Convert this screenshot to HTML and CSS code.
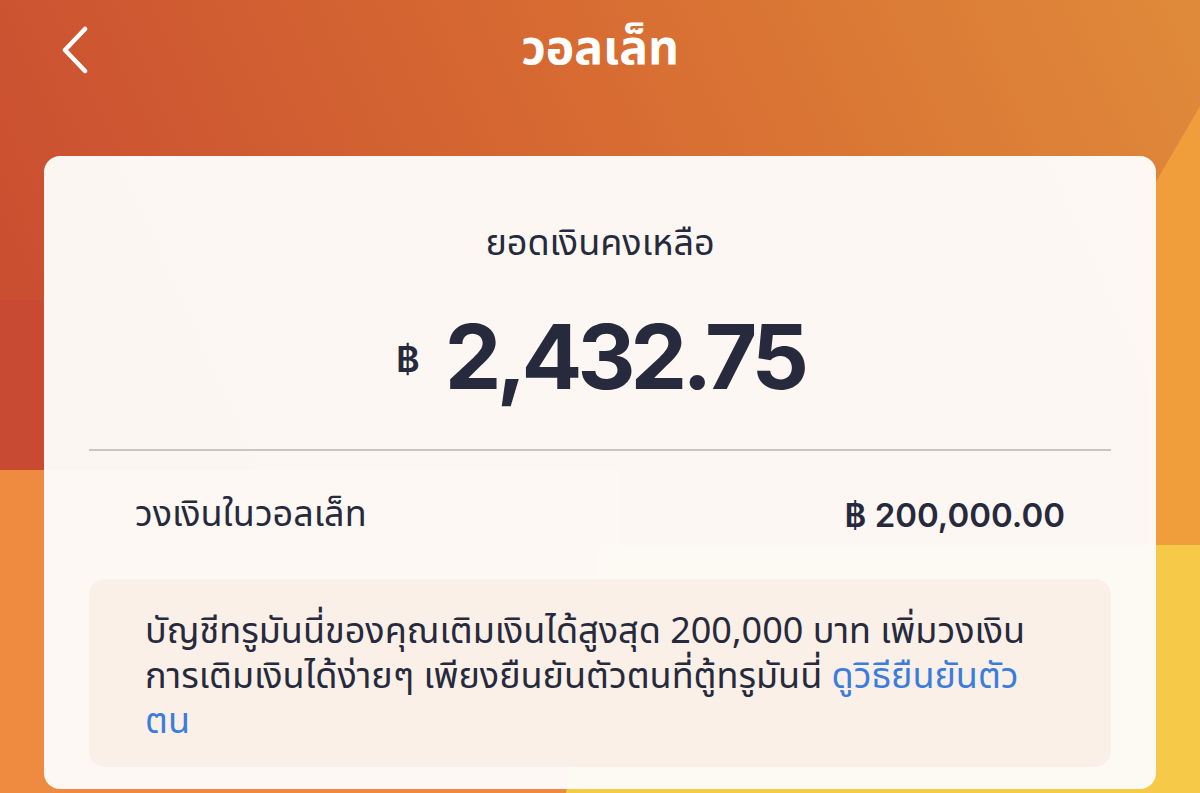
FILE: index.html
```html
<!DOCTYPE html>
<html lang="th">
<head>
<meta charset="utf-8">
<title>วอลเล็ท</title>
<link rel="stylesheet" href="styles.css">
</head>
<body>
<div class="screen">
  <svg class="bg" width="1200" height="793" viewBox="0 0 1200 793" preserveAspectRatio="none" aria-hidden="true">
    <defs>
      <linearGradient id="top" x1="0" y1="0.3" x2="1" y2="0">
        <stop offset="0" stop-color="#ca4f31"/>
        <stop offset="0.5" stop-color="#d76b32"/>
        <stop offset="1" stop-color="#df8a3a"/>
      </linearGradient>
    </defs>
    <rect x="0" y="0" width="1200" height="793" fill="url(#top)"/>
    <rect x="0" y="300" width="60" height="170" fill="#c84a33"/>
    <rect x="0" y="470" width="620" height="323" fill="#ee8b40"/>
    <polygon points="1150,192 1200,106 1200,545 1150,545" fill="#f09e3c"/>
    <polygon points="600,545 1200,545 1200,793 566,793" fill="#f7c949"/>
  </svg>

  <header class="topbar">
    <button class="back" aria-label="ย้อนกลับ">
      <svg width="30" height="48" viewBox="0 0 30 48"><path d="M25 3 L5 24 L25 45" fill="none" stroke="#fff" stroke-width="4.5" stroke-linecap="round" stroke-linejoin="round"/></svg>
    </button>
    <h1 class="title">วอลเล็ท</h1>
  </header>

  <main class="card">
    <section class="balance">
      <p class="balance-label">ยอดเงินคงเหลือ</p>
      <p class="balance-amount"><span class="currency">฿</span><span class="amount">2,432.75</span></p>
    </section>
    <hr class="divider">
    <div class="limit-row">
      <span class="limit-label">วงเงินในวอลเล็ท</span>
      <span class="limit-value">฿ 200,000.00</span>
    </div>
    <div class="notice">
      <p>บัญชีทรูมันนี่ของคุณเติมเงินได้สูงสุด 200,000 บาท เพิ่มวงเงิน<br>การเติมเงินได้ง่ายๆ เพียงยืนยันตัวตนที่ตู้ทรูมันนี่ <a class="link" href="#">ดูวิธียืนยันตัว<br>ตน</a></p>
    </div>
  </main>
</div>
</body>
</html>
```

FILE: styles.css
```css
* { box-sizing: border-box; }
html, body { margin: 0; padding: 0; }
body {
  width: 1200px;
  height: 793px;
  overflow: hidden;
  font-family: "Noto Sans Thai", "Noto Sans Thai UI", Inter, "Noto Sans", sans-serif;
  color: #262a3c;
}
.screen {
  position: relative;
  width: 1200px;
  height: 793px;
  overflow: hidden;
  display: flex;
  flex-direction: column;
}
.bg {
  position: absolute;
  inset: 0;
  z-index: 0;
}
.topbar {
  position: relative;
  z-index: 1;
  height: 156px;
  display: flex;
  justify-content: center;
  padding-top: 18px;
}
.back {
  position: absolute;
  left: 60px;
  top: 26px;
  width: 32px;
  height: 48px;
  padding: 0;
  border: 0;
  background: none;
  display: flex;
}
.title {
  margin: 0;
  color: #fff;
  font-size: 48px;
  font-weight: 700;
  line-height: 64px;
}
.card {
  position: relative;
  z-index: 1;
  margin: 0 44px;
  height: 633px;
  background: rgba(253, 250, 247, 0.98);
  border-radius: 16px;
  padding: 0 45px;
  display: flex;
  flex-direction: column;
}
.balance {
  display: flex;
  flex-direction: column;
  align-items: center;
  padding-top: 62px;
  height: 293px;
}
.balance-label {
  margin: 0;
  font-size: 36px;
  line-height: 52px;
  font-weight: 400;
}
.balance-amount {
  margin: 42px 0 0;
  display: flex;
  align-items: center;
  gap: 25px;
  font-family: Inter, "Noto Sans", sans-serif;
}
.currency {
  font-size: 36px;
  font-weight: 600;
  margin-top: 4px;
}
.amount {
  font-size: 90px;
  font-weight: 700;
  letter-spacing: -5px;
  line-height: 1;
}
.divider {
  margin: 0;
  border: 0;
  height: 2px;
  background: #c9c5c2;
}
.limit-row {
  display: flex;
  justify-content: space-between;
  align-items: center;
  padding: 0 46px;
  height: 128px;
}
.limit-label {
  font-size: 36px;
}
.limit-value {
  font-family: Inter, "Noto Sans", sans-serif;
  font-size: 33px;
  font-weight: 600;
}
.notice {
  background: #fbf0e7;
  border-radius: 16px;
  height: 188px;
  padding: 31px 30px 0 56px;
}
.notice p {
  margin: 0;
  font-size: 36px;
  line-height: 45px;
  white-space: nowrap;
}
.link {
  color: #3b7ddd;
  text-decoration: none;
}
```
